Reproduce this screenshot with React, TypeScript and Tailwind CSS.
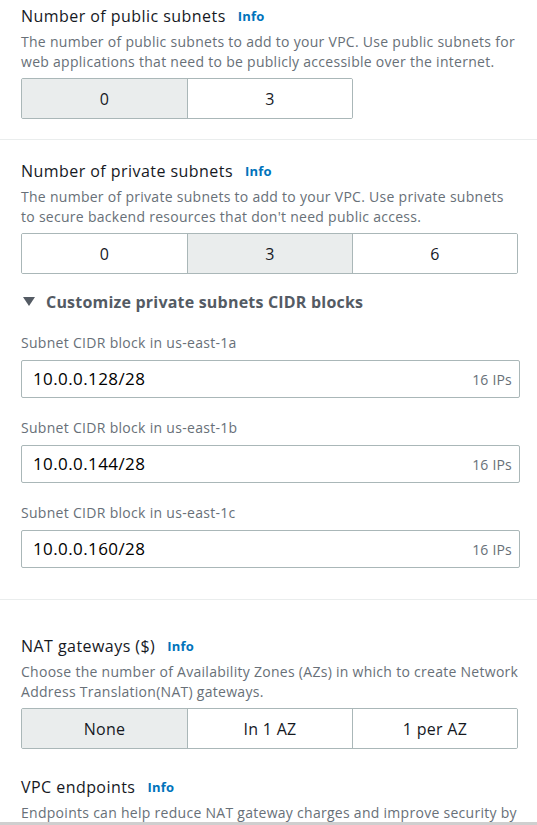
import React from "react";

const font = { fontFamily: '"Open Sans", "Noto Sans", Arial, sans-serif' };

function Heading({ title }: { title: string }) {
  return (
    <div className="flex items-center h-[22px] leading-[22px]">
      <span className="text-[16px] tracking-[0.45px] text-[#16191f]">{title}</span>
      <span className="ml-[12px] text-[13px] font-bold tracking-[0.2px] text-[#0073bb]">Info</span>
    </div>
  );
}

function Desc({ children }: { children: React.ReactNode }) {
  return (
    <p className="mt-[5px] text-[14px] leading-[20px] tracking-[0.28px] text-[#687078] whitespace-nowrap">
      {children}
    </p>
  );
}

function Segmented({
  options,
  selected,
  cols,
}: {
  options: string[];
  selected: number;
  cols: 2 | 3;
}) {
  return (
    <div
      className={
        "mt-[6px] grid h-[41px] border border-[#aab7b8] rounded-[2px] overflow-hidden " +
        (cols === 2 ? "grid-cols-2 w-[332px]" : "grid-cols-3 w-[497px]")
      }
    >
      {options.map((o, i) => (
        <div
          key={o}
          className={
            "flex items-center justify-center text-[16px] tracking-[0.3px] text-[#16191f] " +
            (i > 0 ? "border-l border-[#aab7b8] " : "") +
            (i === selected ? "bg-[#eaeded]" : "bg-white")
          }
        >
          {o}
        </div>
      ))}
    </div>
  );
}

function CidrField({ zone, value }: { zone: string; value: string }) {
  return (
    <div className="mt-[20px]">
      <div className="text-[14px] leading-[20px] tracking-[0.3px] text-[#687078]">
        Subnet CIDR block in {zone}
      </div>
      <div className="mt-[7px] flex items-center justify-between w-[499px] h-[38px] border border-[#aab7b8] rounded-[2px] pl-[11px] pr-[7px]">
        <span className="text-[17px] tracking-[0.4px] text-black">{value}</span>
        <span className="text-[14px] tracking-[0.2px] text-[#687078]">16 IPs</span>
      </div>
    </div>
  );
}

export default function App() {
  return (
    <div className="w-[537px] h-[825px] overflow-hidden bg-white relative" style={font}>
      <section className="px-[21px] pt-[5px] pb-[20px] border-b border-[#eaeded]">
        <Heading title="Number of public subnets" />
        <Desc>
          The number of public subnets to add to your VPC. Use public subnets for
          <br />
          web applications that need to be publicly accessible over the internet.
        </Desc>
        <Segmented options={["0", "3"]} selected={0} cols={2} />
      </section>

      <section className="px-[21px] pt-[20px] pb-[31px] border-b border-[#eaeded]">
        <Heading title="Number of private subnets" />
        <Desc>
          The number of private subnets to add to your VPC. Use private subnets
          <br />
          to secure backend resources that don't need public access.
        </Desc>
        <Segmented options={["0", "3", "6"]} selected={1} cols={3} />

        <div className="mt-[17px] flex items-center h-[22px]">
          <svg width="12" height="10" viewBox="0 0 12 10" className="ml-[2px]">
            <path d="M0 0 H12 L6 9 Z" fill="#545b64" />
          </svg>
          <span className="ml-[11px] text-[16px] font-bold tracking-[0.2px] text-[#545b64]">
            Customize private subnets CIDR blocks
          </span>
        </div>

        <CidrField zone="us-east-1a" value="10.0.0.128/28" />
        <CidrField zone="us-east-1b" value="10.0.0.144/28" />
        <CidrField zone="us-east-1c" value="10.0.0.160/28" />
      </section>

      <section className="px-[21px] pt-[35px]">
        <Heading title="NAT gateways ($)" />
        <Desc>
          Choose the number of Availability Zones (AZs) in which to create Network
          <br />
          Address Translation(NAT) gateways.
        </Desc>
        <Segmented options={["None", "In 1 AZ", "1 per AZ"]} selected={0} cols={3} />

        <div className="mt-[27px]">
          <Heading title="VPC endpoints" />
          <Desc>Endpoints can help reduce NAT gateway charges and improve security by</Desc>
        </div>
      </section>

      <div className="absolute left-0 right-0 bottom-0 h-[3px] bg-[#cfcfcf]" />
    </div>
  );
}
